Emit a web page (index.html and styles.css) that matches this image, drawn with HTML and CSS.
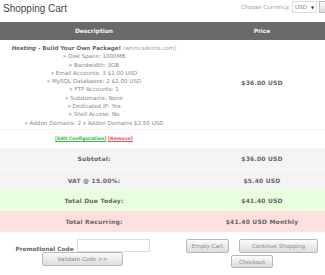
FILE: index.html
```html
<!DOCTYPE html>
<html>
<head>
    <link rel="stylesheet" href="styles.css">
</head>
<body>

<div class="page">
    <div class="topbar">
        <h1>Shopping Cart</h1>
        <div class="currency">
            <span>Choose Currency:</span>
            <span class="select">USD <span class="arrow">&#9660;</span></span>
            <span class="go"></span>
        </div>
    </div>

    <table class="cart">
        <thead>
            <tr>
                <th class="desc">Description</th>
                <th class="price">Price</th>
            </tr>
        </thead>
        <tbody>
            <tr class="item">
                <td>
                    <strong><em>Hosting</em> - Build Your Own Package!</strong> <span class="domain">(whmcsdemo.com)</span><br>
                    &raquo; Disk Space: 1000MB<br>
                    &raquo; Bandwidth: 3GB<br>
                    &raquo; Email Accounts: 3 $1.00 USD<br>
                    &raquo; MySQL Databases: 2 $2.00 USD<br>
                    &raquo; FTP Accounts: 1<br>
                    &raquo; Subdomains: None<br>
                    &raquo; Dedicated IP: Yes<br>
                    &raquo; Shell Access: No<br>
                    &raquo; Addon Domains: 2 x Addon Domains $2.50 USD
                </td>
                <td class="amount">$36.00 USD</td>
            </tr>
            <tr class="actions">
                <td><a href="#" class="edit">[Edit Configuration]</a> <a href="#" class="remove">[Remove]</a></td>
                <td></td>
            </tr>
            <tr class="total">
                <td>Subtotal:</td>
                <td>$36.00 USD</td>
            </tr>
            <tr class="total">
                <td>VAT @ 15.00%:</td>
                <td>$5.40 USD</td>
            </tr>
            <tr class="total due">
                <td>Total Due Today:</td>
                <td>$41.40 USD</td>
            </tr>
            <tr class="total recurring">
                <td>Total Recurring:</td>
                <td>$41.40 USD Monthly</td>
            </tr>
        </tbody>
    </table>

    <div class="bottom">
        <div class="promo">
            <div class="promo-line">
                <strong>Promotional Code</strong>
                <input type="text" class="code">
            </div>
            <button class="btn validate">Validate Code &gt;&gt;</button>
        </div>
        <div class="cart-buttons">
            <div class="btn-line">
                <button class="btn empty">Empty Cart</button>
                <button class="btn continue">Continue Shopping</button>
            </div>
            <button class="btn checkout">Checkout</button>
        </div>
    </div>
</div>

</body>
</html>
```

FILE: styles.css
```css
* {
    box-sizing: border-box;
}
html, body {
    margin: 0;
    padding: 0;
    background-color: #fff;
    overflow: hidden;
}
body {
    font-family: "DejaVu Sans", Verdana, sans-serif;
    color: #666;
}
.page {
    width: 336px;
}
.topbar {
    display: flex;
    justify-content: space-between;
    align-items: flex-start;
    height: 22px;
}
h1 {
    margin: 0;
    padding: 3px 0 0 3px;
    font-family: "Liberation Sans", Arial, sans-serif;
    font-weight: normal;
    font-size: 10px;
    color: #444;
}
.currency {
    display: flex;
    align-items: center;
    gap: 2px;
    padding-top: 1px;
    font-size: 5.6px;
    color: #999;
}
.select {
    width: 25px;
    height: 12px;
    border: 1px solid #ddd;
    display: flex;
    align-items: center;
    justify-content: space-between;
    padding: 0 2px;
    color: #888;
}
.arrow {
    font-size: 4px;
    color: #333;
}
.go {
    width: 16px;
    height: 12px;
    border: 1px solid #bbb;
    background: linear-gradient(#fafafa, #ddd);
    margin-right: 1px;
}
.cart {
    width: 336px;
    border-collapse: collapse;
}
.cart th {
    background-color: #6a6a6a;
    color: #f4f4f4;
    font-size: 5.9px;
    height: 18px;
    padding: 0;
}
.cart th.desc {
    width: 188px;
}
.cart td {
    text-align: center;
    padding: 0;
}
.item td {
    font-size: 5.6px;
    line-height: 8.3px;
    padding: 4px 0 2px;
    color: #888;
    border-bottom: 1px solid #f2f2f2;
}
.item strong {
    color: #666;
}
.domain {
    color: #a0a0a0;
}
.item td.amount {
    font-weight: bold;
    font-size: 6px;
    color: #666;
    letter-spacing: 0.2px;
    padding-top: 0;
}
.actions td {
    height: 19px;
    font-size: 4.6px;
    font-weight: bold;
}
.actions a.edit {
    color: #3cb44a;
}
.actions a.remove {
    color: #e5505a;
}
.total td {
    height: 21px;
    background-color: #f4f4f4;
    font-weight: bold;
    font-size: 6px;
    letter-spacing: 0.2px;
    color: #666;
    border-top: 1px solid #fbfbfb;
}
.total.due td {
    background-color: #e8ffdd;
    border-top: none;
}
.total.recurring td {
    background-color: #ffe0e0;
    border-top: none;
}
.bottom {
    display: flex;
    padding-top: 7px;
}
.promo, .cart-buttons {
    width: 50%;
    display: flex;
    flex-direction: column;
    align-items: center;
}
.promo {
    padding-right: 3px;
}
.promo-line {
    display: flex;
    align-items: flex-end;
    gap: 3px;
    font-size: 5.8px;
    color: #666;
}
.code {
    width: 73px;
    height: 13px;
    border: 1px solid #ddd;
    padding: 0;
    margin: 0;
}
.btn {
    font-family: "DejaVu Sans", Verdana, sans-serif;
    font-size: 5.6px;
    color: #888;
    background: linear-gradient(#fbfbfb, #dcdcdc);
    border: 1px solid #b8b8b8;
    border-radius: 2px;
    height: 14px;
    padding: 0;
    margin: 0;
    cursor: pointer;
}
.validate {
    width: 81px;
}
.btn-line {
    display: flex;
    gap: 10px;
}
.empty {
    width: 43px;
}
.continue {
    width: 79px;
}
.checkout {
    width: 42px;
    margin-top: 2px;
    height: 13px;
}
```
